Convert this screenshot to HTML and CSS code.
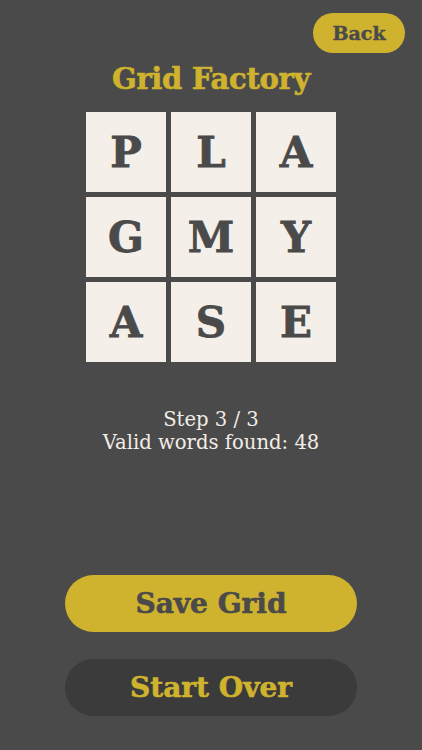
FILE: index.html
```html
<!DOCTYPE html>
<html>
<head>
<meta charset="utf-8">
<link rel="stylesheet" href="styles.css">
</head>
<body>
<div class="screen">
  <div class="topbar">
    <button class="back">Back</button>
  </div>
  <h1 class="title">Grid Factory</h1>
  <div class="grid">
    <div class="tile">P</div>
    <div class="tile">L</div>
    <div class="tile">A</div>
    <div class="tile">G</div>
    <div class="tile">M</div>
    <div class="tile">Y</div>
    <div class="tile">A</div>
    <div class="tile">S</div>
    <div class="tile">E</div>
  </div>
  <div class="status">
    <div>Step 3 / 3</div>
    <div>Valid words found: 48</div>
  </div>
  <div class="actions">
    <button class="btn btn-save">Save Grid</button>
    <button class="btn btn-over">Start Over</button>
  </div>
</div>
</body>
</html>
```

FILE: styles.css
```css
html, body {
  margin: 0;
  padding: 0;
  background: #4a4a4a;
}
.screen {
  width: 422px;
  height: 750px;
  display: flex;
  flex-direction: column;
  align-items: center;
  font-family: "DejaVu Serif", serif;
  box-sizing: border-box;
  padding: 13px 0 34px;
}
.topbar {
  width: 100%;
  display: flex;
  justify-content: flex-end;
  padding-right: 17px;
  box-sizing: border-box;
}
.back {
  width: 92px;
  height: 40px;
  border: none;
  border-radius: 20px;
  background: #cfb22e;
  color: #4a4a4a;
  font-family: "DejaVu Serif", serif;
  font-weight: bold;
  font-size: 19px;
  padding: 0;
  -webkit-text-stroke: 0.4px #4a4a4a;
}
.title {
  margin: 6px 0 0;
  font-size: 29px;
  line-height: 40px;
  color: #cfb22e;
  font-weight: bold;
  letter-spacing: -0.3px;
  -webkit-text-stroke: 0.6px #cfb22e;
}
.grid {
  margin-top: 13px;
  display: grid;
  grid-template-columns: repeat(3, 80px);
  grid-auto-rows: 80px;
  gap: 5px;
}
.tile {
  background: #f4efe9;
  color: #4a4a4a;
  font-weight: bold;
  font-size: 42px;
  display: flex;
  align-items: center;
  justify-content: center;
  -webkit-text-stroke: 0.8px #4a4a4a;
}
.status {
  margin-top: 46px;
  text-align: center;
  color: #f2ede6;
  font-size: 19.6px;
  line-height: 23px;
}
.actions {
  margin-top: auto;
  display: flex;
  flex-direction: column;
  gap: 27px;
}
.btn {
  width: 292px;
  height: 57px;
  border: none;
  border-radius: 29px;
  font-family: "DejaVu Serif", serif;
  font-weight: bold;
  font-size: 28px;
  padding: 0;
}
.btn-save {
  background: #cfb22e;
  color: #4a4a4a;
  -webkit-text-stroke: 0.6px #4a4a4a;
}
.btn-over {
  background: #3b3b3b;
  color: #cfb22e;
  -webkit-text-stroke: 0.6px #cfb22e;
}
```
